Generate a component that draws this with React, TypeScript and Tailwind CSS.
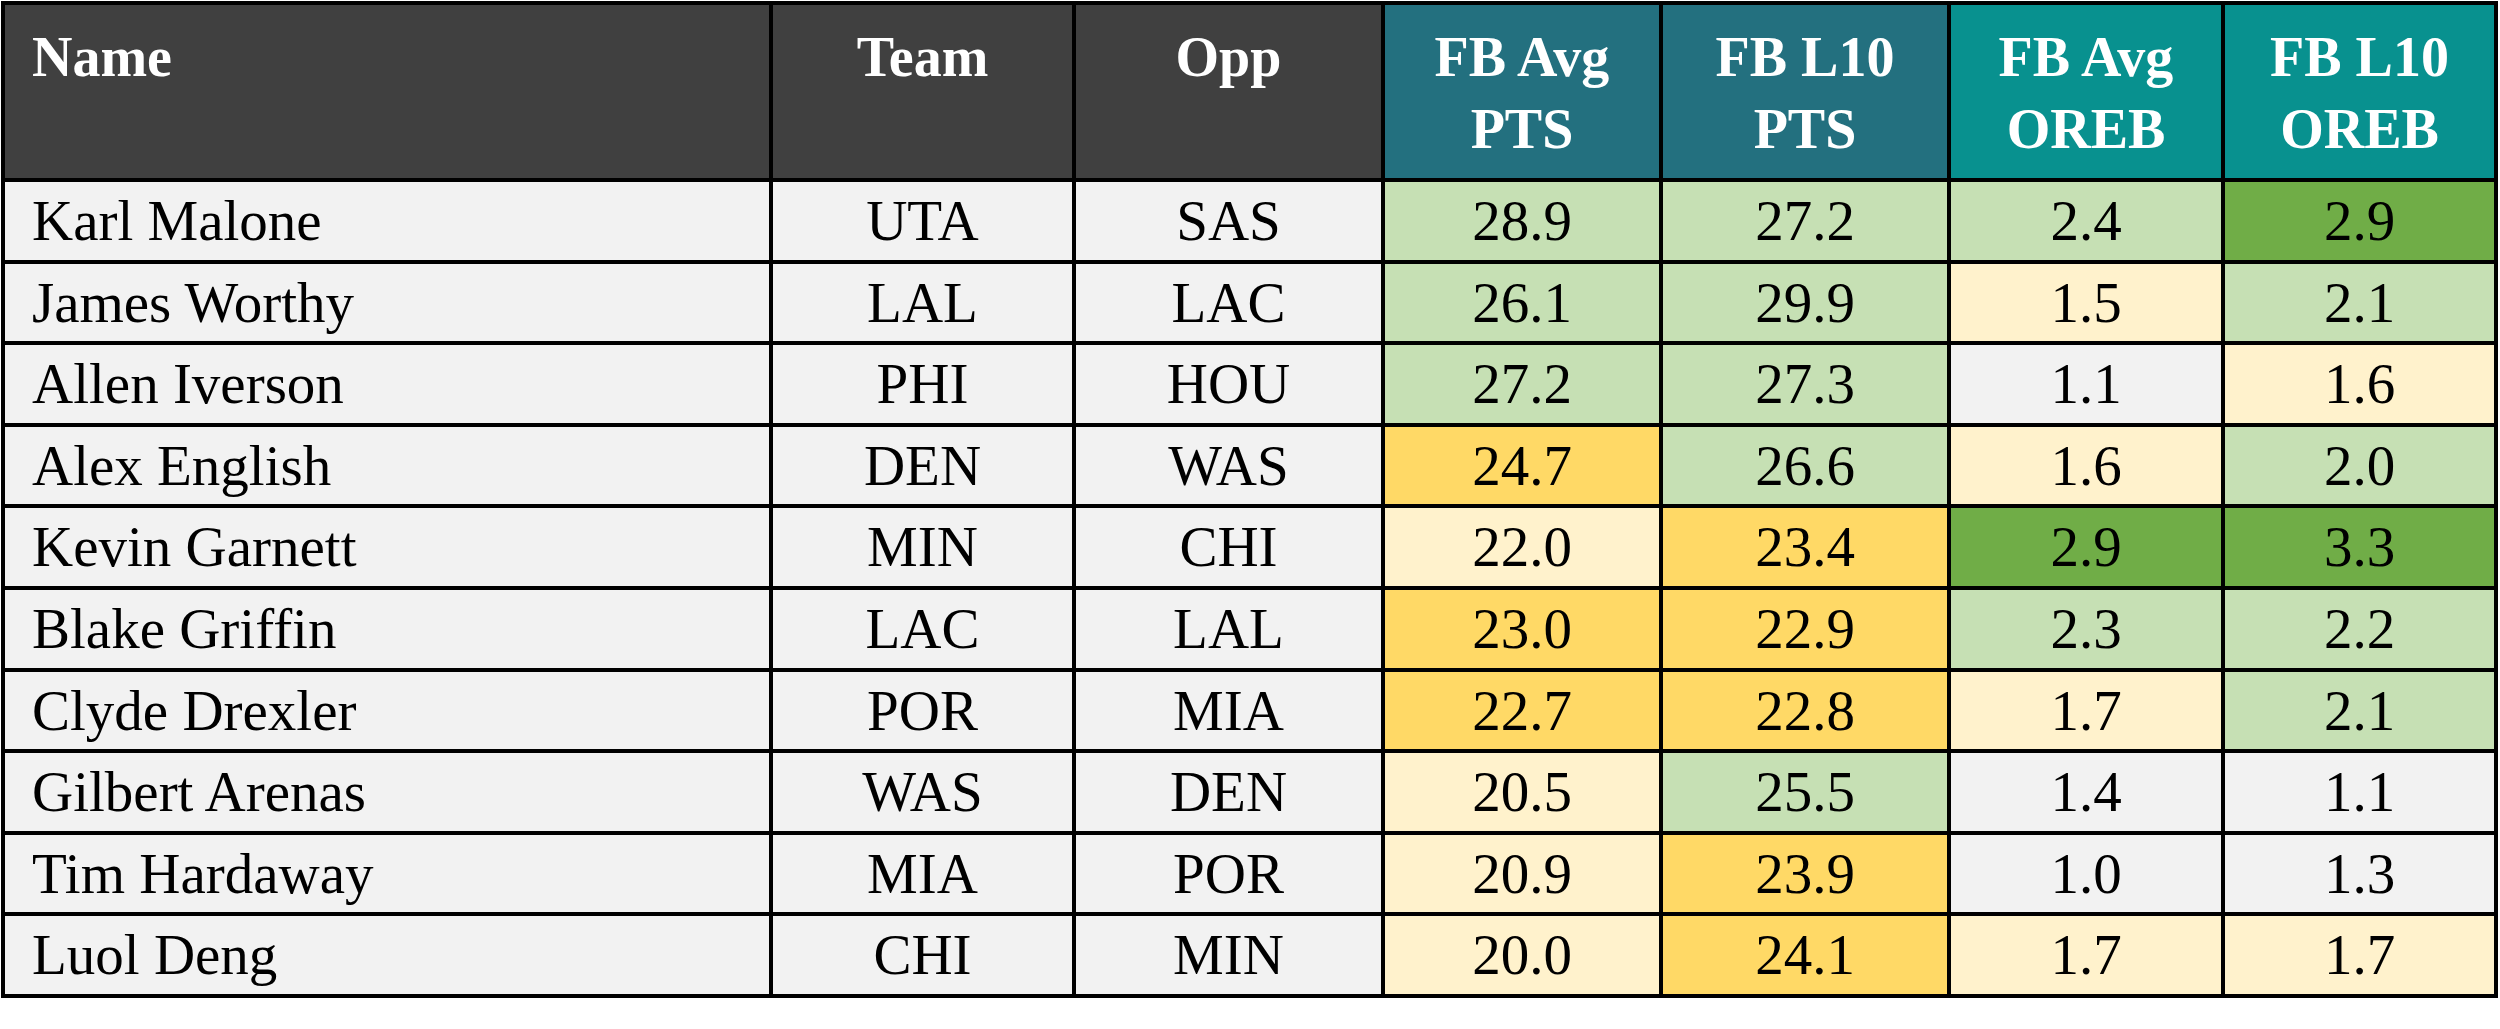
import React from 'react';

type Shade = 'lg' | 'dg' | 'y' | 'ly' | 'g';

const shadeClass: Record<Shade, string> = {
  lg: 'bg-[#c6e0b4]',
  dg: 'bg-[#70ad47]',
  y: 'bg-[#ffd966]',
  ly: 'bg-[#fff2cc]',
  g: 'bg-[#f2f2f2]',
};

type Row = {
  name: string;
  team: string;
  opp: string;
  stats: [string, Shade][];
};

const rows: Row[] = [
  { name: 'Karl Malone', team: 'UTA', opp: 'SAS', stats: [['28.9', 'lg'], ['27.2', 'lg'], ['2.4', 'lg'], ['2.9', 'dg']] },
  { name: 'James Worthy', team: 'LAL', opp: 'LAC', stats: [['26.1', 'lg'], ['29.9', 'lg'], ['1.5', 'ly'], ['2.1', 'lg']] },
  { name: 'Allen Iverson', team: 'PHI', opp: 'HOU', stats: [['27.2', 'lg'], ['27.3', 'lg'], ['1.1', 'g'], ['1.6', 'ly']] },
  { name: 'Alex English', team: 'DEN', opp: 'WAS', stats: [['24.7', 'y'], ['26.6', 'lg'], ['1.6', 'ly'], ['2.0', 'lg']] },
  { name: 'Kevin Garnett', team: 'MIN', opp: 'CHI', stats: [['22.0', 'ly'], ['23.4', 'y'], ['2.9', 'dg'], ['3.3', 'dg']] },
  { name: 'Blake Griffin', team: 'LAC', opp: 'LAL', stats: [['23.0', 'y'], ['22.9', 'y'], ['2.3', 'lg'], ['2.2', 'lg']] },
  { name: 'Clyde Drexler', team: 'POR', opp: 'MIA', stats: [['22.7', 'y'], ['22.8', 'y'], ['1.7', 'ly'], ['2.1', 'lg']] },
  { name: 'Gilbert Arenas', team: 'WAS', opp: 'DEN', stats: [['20.5', 'ly'], ['25.5', 'lg'], ['1.4', 'g'], ['1.1', 'g']] },
  { name: 'Tim Hardaway', team: 'MIA', opp: 'POR', stats: [['20.9', 'ly'], ['23.9', 'y'], ['1.0', 'g'], ['1.3', 'g']] },
  { name: 'Luol Deng', team: 'CHI', opp: 'MIN', stats: [['20.0', 'ly'], ['24.1', 'y'], ['1.7', 'ly'], ['1.7', 'ly']] },
];

const headers: { label: string[]; bg: string }[] = [
  { label: ['FB Avg', 'PTS'], bg: 'bg-[#23707f]' },
  { label: ['FB L10', 'PTS'], bg: 'bg-[#23707f]' },
  { label: ['FB Avg', 'OREB'], bg: 'bg-[#08918f]' },
  { label: ['FB L10', 'OREB'], bg: 'bg-[#08918f]' },
];

const cell = 'flex items-center h-[77.6px] text-[57px] text-black';

export default function App() {
  return (
    <div className="min-h-screen bg-white font-['Liberation_Serif',serif]">
      <div className="ml-[1px] mt-[1px] inline-grid grid-cols-[764px_299px_305px_274px_284px_270px_269px] gap-[4px] bg-black p-[4px]">
        {/* header */}
        <div className="h-[173px] bg-[#404040] pl-[27px] pt-[16px] text-[56px] font-bold leading-[72px] text-white">Name</div>
        <div className="h-[173px] bg-[#404040] pt-[16px] text-center text-[56px] font-bold leading-[72px] text-white">Team</div>
        <div className="h-[173px] bg-[#404040] pt-[16px] text-center text-[56px] font-bold leading-[72px] text-white">Opp</div>
        {headers.map((h, i) => (
          <div key={i} className={`h-[173px] ${h.bg} pt-[16px] text-center text-[56px] font-bold leading-[72px] text-white`}>
            {h.label[0]}
            <br />
            {h.label[1]}
          </div>
        ))}

        {rows.map((r) => (
          <React.Fragment key={r.name}>
            <div className={`${cell} bg-[#f2f2f2] pl-[27px]`}>{r.name}</div>
            <div className={`${cell} justify-center bg-[#f2f2f2]`}>{r.team}</div>
            <div className={`${cell} justify-center bg-[#f2f2f2]`}>{r.opp}</div>
            {r.stats.map(([v, s], i) => (
              <div key={i} className={`${cell} justify-center ${shadeClass[s]}`}>
                {v}
              </div>
            ))}
          </React.Fragment>
        ))}
      </div>
    </div>
  );
}
